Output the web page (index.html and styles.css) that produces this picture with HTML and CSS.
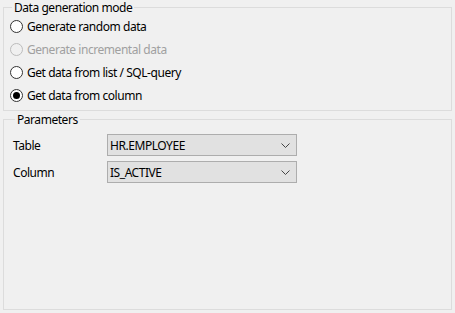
FILE: index.html
```html
<!DOCTYPE html>
<html lang="en">
<head>
    <meta charset="UTF-8">
    <title>Data generation</title>
    <link rel="stylesheet" href="styles.css">
</head>
<body>
<div class="page">
    <fieldset class="group mode">
        <legend>Data generation mode</legend>
        <label class="option">
            <input type="radio" name="mode">
            <span>Generate random data</span>
        </label>
        <label class="option disabled">
            <input type="radio" name="mode" disabled>
            <span>Generate incremental data</span>
        </label>
        <label class="option">
            <input type="radio" name="mode">
            <span>Get data from list / SQL-query</span>
        </label>
        <label class="option">
            <input type="radio" name="mode" checked>
            <span>Get data from column</span>
        </label>
    </fieldset>

    <fieldset class="group params">
        <legend>Parameters</legend>
        <div class="field">
            <span class="field-label">Table</span>
            <div class="combo">
                <span>HR.EMPLOYEE</span>
                <svg width="9" height="5" viewBox="0 0 9 5"><path d="M0.5 0.5 L4.5 4.5 L8.5 0.5" fill="none" stroke="#444" stroke-width="1"/></svg>
            </div>
        </div>
        <div class="field">
            <span class="field-label">Column</span>
            <div class="combo">
                <span>IS_ACTIVE</span>
                <svg width="9" height="5" viewBox="0 0 9 5"><path d="M0.5 0.5 L4.5 4.5 L8.5 0.5" fill="none" stroke="#444" stroke-width="1"/></svg>
            </div>
        </div>
    </fieldset>
</div>
</body>
</html>
```

FILE: styles.css
```css
html, body {
    margin: 0;
    height: 100%;
}

body {
    background: #f0f0f0;
    color: #000;
    font-family: "Noto Sans", sans-serif;
    font-size: 12px;
    letter-spacing: -0.45px;
}

.page {
    height: 313px;
    display: flex;
    flex-direction: column;
    padding: 0 3px 3px;
    box-sizing: border-box;
}

.group {
    margin: 0;
    border: 1px solid #dcdcdc;
    min-width: 0;
}

.group legend {
    padding: 0 2px;
    margin-left: 2px;
    line-height: 15px;
}

.mode {
    padding: 0 6px 3px;
}

.params {
    margin-top: 1px;
    flex: 1;
    padding: 7px 9px 0;
}

.option {
    display: flex;
    align-items: center;
    height: 23px;
}

.option input {
    appearance: none;
    width: 13px;
    height: 13px;
    margin: 0 4px 0 0;
    border: 1px solid #333;
    border-radius: 50%;
    background: #fff;
    box-sizing: border-box;
    display: grid;
    place-content: center;
}

.option input:checked::before {
    content: "";
    width: 7px;
    height: 7px;
    border-radius: 50%;
    background: #000;
}

.option.disabled {
    color: #a0a0a0;
}

.option.disabled input {
    border-color: #bcbcbc;
    background: #f0f0f0;
}

.field {
    display: flex;
    align-items: center;
    margin-bottom: 5px;
}

.field-label {
    width: 94px;
}

.combo {
    width: 190px;
    height: 22px;
    box-sizing: border-box;
    border: 1px solid #adadad;
    background: #e1e1e1;
    display: flex;
    align-items: center;
    justify-content: space-between;
    padding: 0 6px 0 2px;
}
```
